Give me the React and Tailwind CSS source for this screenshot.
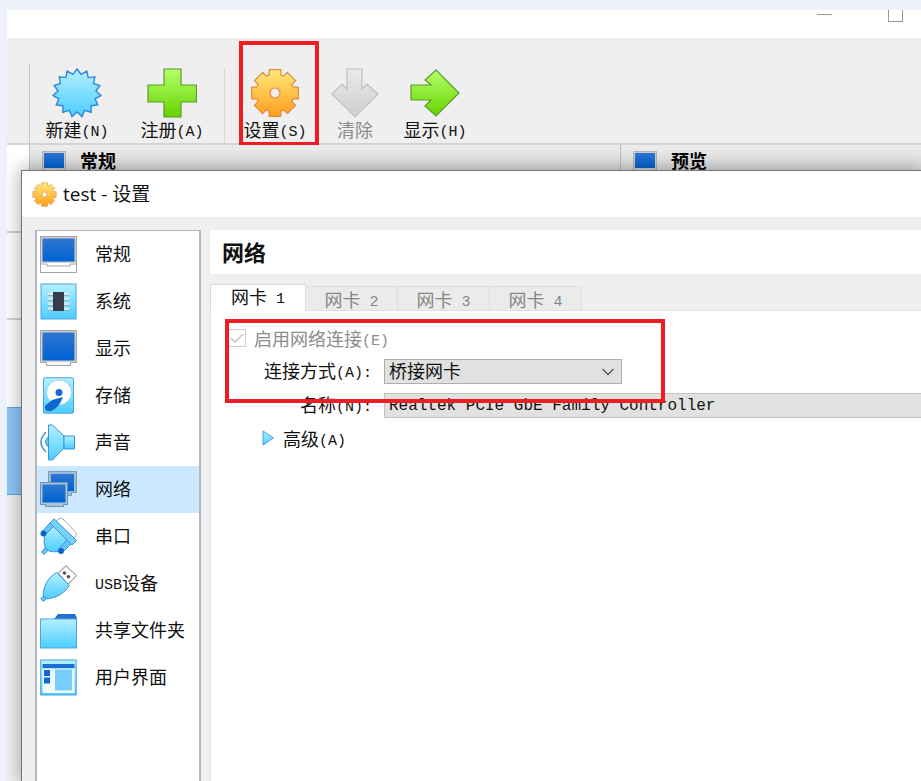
import { useState } from 'react';

const tabs = [1, 2, 3, 4];

// points of the "new" badge, 15 spikes
const burst = Array.from({ length: 30 }, (_, i) => {
  const r = i % 2 ? 19 : 24;
  const a = (i * 12 - 90) * (Math.PI / 180);
  return `${(25 + r * Math.cos(a)).toFixed(1)},${(25 + r * Math.sin(a)).toFixed(1)}`;
}).join(' ');

// outline of the cog, 8 teeth
const cog = Array.from({ length: 8 }, (_, i) =>
  [[-18, 19], [-14, 24], [14, 24], [18, 19]]
    .map(([deg, r]) => {
      const a = (i * 45 + deg - 90) * (Math.PI / 180);
      return `${(25 + r * Math.cos(a)).toFixed(1)},${(25 + r * Math.sin(a)).toFixed(1)}`;
    })
    .join(' ')
).join(' ');

function Gradients() {
  return (
    <svg width="0" height="0" className="absolute" aria-hidden="true">
      <defs>
        <linearGradient id="sky" x1="0" y1="0" x2="0" y2="1">
          <stop offset="0" stopColor="#b4f0ff" />
          <stop offset="1" stopColor="#4ccdff" />
        </linearGradient>
        <linearGradient id="lime" x1="0" y1="0" x2="0" y2="1">
          <stop offset="0" stopColor="#b6ff6c" />
          <stop offset="1" stopColor="#66d400" />
        </linearGradient>
        <linearGradient id="amber" x1="0" y1="0" x2="0" y2="1">
          <stop offset="0" stopColor="#ffe87a" />
          <stop offset="1" stopColor="#ff9e1e" />
        </linearGradient>
        <linearGradient id="grey" x1="0" y1="0" x2="0" y2="1">
          <stop offset="0" stopColor="#e9e9e9" />
          <stop offset="1" stopColor="#cfcfcf" />
        </linearGradient>
        <linearGradient id="royal" x1="0" y1="0" x2="0" y2="1">
          <stop offset="0" stopColor="#2f76d2" />
          <stop offset="1" stopColor="#0063d3" />
        </linearGradient>
      </defs>
    </svg>
  );
}

function Cog({ className }) {
  return (
    <svg viewBox="0 0 50 50" className={className}>
      <path
        d={`M${cog}Z M30 25a5 5 0 1 0-10 0a5 5 0 1 0 10 0Z`}
        fill="url(#amber)"
        fillRule="evenodd"
        stroke="#e08a3c"
        strokeWidth="1.2"
        strokeLinejoin="round"
      />
    </svg>
  );
}

function ScreenIcon({ className }) {
  return (
    <svg viewBox="0 0 24 24" className={className}>
      <rect x="0.5" y="0.5" width="23" height="22" fill="#cfcfcf" stroke="#b4b4b4" />
      <rect x="2" y="2" width="20" height="15" fill="url(#royal)" />
      <path d="M5 18.500h14v2h-14z" fill="#f2f2f2" />
    </svg>
  );
}

const toolIcons = {
  create: (
    <polygon points={burst} fill="url(#sky)" stroke="#2f86da" strokeWidth="1.4" />
  ),
  register: (
    <path d="M17 1h17v16h15.500v17h-15.500v15h-17v-15h-16v-17h16z" fill="url(#lime)" stroke="#5c9a2c" strokeWidth="1.2" />
  ),
  discard: (
    <path d="M17 1h15v20l5-5 11 10-23 23-23-23 10-10 5 5z" fill="url(#grey)" stroke="#c0c0c0" strokeWidth="1.2" />
  ),
  show: (
    <path d="M1 17h20l-6-5 11-10 23 23-23 23-11-10 6-6h-20z" fill="url(#lime)" stroke="#5c9a2c" strokeWidth="1.2" />
  ),
};

const sideIcons = {
  general: (
    <>
      <rect x="0.5" y="0.5" width="36" height="36" fill="#fff" stroke="#a4a4a4" />
      <path d="M1 1h35v26h-35z" fill="#cdcdcd" />
      <rect x="2.500" y="2.500" width="32" height="23" fill="url(#royal)" />
      <path d="M1 28h6v2h23v-2h6" fill="none" stroke="#a4a4a4" />
    </>
  ),
  system: (
    <>
      <rect x="1" y="1" width="35" height="35" fill="url(#sky)" stroke="#4aa5e0" />
      <path d="M8 11h21M8 16h21M8 21h21M8 26h21" stroke="#d5eaf2" strokeWidth="3" />
      <path d="M8 12.500h21M8 17.500h21M8 22.500h21M8 27.500h21" stroke="#7fa3b5" strokeWidth="0.800" />
      <rect x="13" y="9" width="11" height="19" fill="#373c4a" />
    </>
  ),
  display: (
    <>
      <path d="M0.500 0.500h36v32h-6v3h-24v-3h-6z" fill="#f3f3f3" stroke="#a4a4a4" />
      <path d="M1 1h35v31h-35z" fill="#cdcdcd" />
      <rect x="2.500" y="2.500" width="32" height="28" fill="url(#royal)" />
      <path d="M7 33h23" stroke="#fff" />
    </>
  ),
  storage: (
    <>
      <rect x="3.500" y="0.700" width="30" height="35.500" rx="1" fill="url(#sky)" stroke="#4aa5e0" />
      <circle cx="19" cy="15.500" r="12.500" fill="#fff" stroke="#9cc9ec" strokeWidth="0.800" />
      <path d="M23 20L12 23L5 29Q4 35 11 34Q19 31 23 20Z" fill="#0c67cf" />
      <circle cx="19" cy="15.500" r="3.500" fill="#1468cf" />
    </>
  ),
  audio: (
    <>
      <path d="M6 8Q-4 18 6 28" fill="none" stroke="#4a94da" strokeWidth="1.500" />
      <path d="M9 12Q2 18 9 24Z" fill="#67c8f5" stroke="#3b94d8" />
      <path d="M8.500 1h4L24 12v12L12.500 36h-4z" fill="url(#sky)" stroke="#3b94d8" />
      <path d="M24 12h10.500v13H24z" fill="url(#sky)" stroke="#3b94d8" />
    </>
  ),
  network: (
    <>
      <path d="M8.500 0.500h28v21h-5v3h-23z" fill="#9dbbd2" stroke="#7d9bb3" />
      <path d="M11 3h23v17h-23z" fill="url(#royal)" />
      <path d="M0.500 11.500h27v22h-4v2h-18v-2h-5z" fill="#a7c6dc" stroke="#7191ab" />
      <path d="M2.500 13.500h23v18h-23z" fill="url(#royal)" />
    </>
  ),
  serial: (
    <>
      <path d="M15 4L19 0.800Q21 0 23 1L36 14.500Q37 16 36 18L32 22Z" fill="#fff" stroke="#aaa" />
      <path d="M1.500 34L6 29L9 31.500L4 36.500Z" fill="#5cc6fb" stroke="#3b94d8" />
      <path d="M13 7L5 15L4 25Q4 30 9 33Q17 35 21 32L30 24Z" fill="url(#sky)" stroke="#3b94d8" />
      <path d="M10 5L14 0.700L36.500 22.500L32 27Z" fill="#75d3fb" stroke="#3b94d8" />
      <path d="M10 5L13.500 8.500L5.500 16.500L2 13.500ZM27 22L31 26L23 34L19 31Z" fill="#66c5f5" stroke="#3b94d8" />
      <circle cx="3.500" cy="15.500" r="3" fill="#0c62cc" />
      <circle cx="21" cy="33" r="3" fill="#0c62cc" />
    </>
  ),
  usb: (
    <>
      <path d="M18 8L26 0.800L36.500 10.500L28 19.500Z" fill="#fff" stroke="#aaa" strokeWidth="1.200" />
      <circle cx="24.500" cy="8" r="1.800" fill="#555" />
      <circle cx="28.500" cy="11.800" r="1.800" fill="#555" />
      <path d="M16.500 7.500L29.500 20.500Q22 32 7 34L3 30Q4 15 16.500 7.500Z" fill="url(#sky)" stroke="#3b94d8" />
      <path d="M0.800 34L3.500 31L6.500 33.500L3.500 36.500Z" fill="#5cc6fb" stroke="#3b94d8" />
    </>
  ),
  folder: (
    <>
      <path d="M14 7L18 2h17l2 4v4h-23z" fill="#2470d0" />
      <rect x="0.500" y="7" width="36" height="29" fill="url(#sky)" stroke="#4aa5e0" />
    </>
  ),
  ui: (
    <>
      <rect x="0.700" y="1" width="35.500" height="35" fill="url(#sky)" stroke="#4aa5e0" />
      <path d="M2.500 5h32v4h-32z" fill="#1f6fd2" />
      <path d="M2.500 10h32v24h-32z" fill="#f2fbff" />
      <path d="M4 11h6v6h-6zM4 18.500h6v6h-6z" fill="#0c66d3" />
      <path d="M15 10.500h17v21h-17z" fill="#78cdff" />
    </>
  ),
};

const categories = [
  { id: 'general', label: '常规' },
  { id: 'system', label: '系统' },
  { id: 'display', label: '显示' },
  { id: 'storage', label: '存储' },
  { id: 'audio', label: '声音' },
  { id: 'network', label: '网络' },
  { id: 'serial', label: '串口' },
  { id: 'usb', mono: 'USB', label: '设备' },
  { id: 'folder', label: '共享文件夹' },
  { id: 'ui', label: '用户界面' },
];

// accelerator keys and numbers are set in the narrower fixed-width face
function Mono({ children }) {
  return (
    <span className="align-[1px] font-['Liberation_Mono',monospace] text-[15px] leading-none whitespace-pre">
      {children}
    </span>
  );
}

function ToolButton({ icon, label, hotkey, disabled, marked }) {
  return (
    <button
      type="button"
      disabled={disabled}
      className="relative flex w-20 shrink-0 flex-col items-center self-start text-[#111] disabled:text-[#8c8c8c]"
    >
      {icon === 'settings' ? (
        <Cog className="size-[50px] shrink-0" />
      ) : (
        <svg viewBox="0 0 50 50" className="size-[50px] shrink-0">{toolIcons[icon]}</svg>
      )}
      <span className="h-6 leading-[22px] whitespace-nowrap">
        {label}
        {hotkey && <Mono>({hotkey})</Mono>}
      </span>
      {marked && (
        <span className="absolute -top-[27px] -right-1 -bottom-1 left-1 border-4 border-[#f01c24]" />
      )}
    </button>
  );
}

function PanelHeader({ children }) {
  return (
    <div className="flex h-[25px] items-start gap-[14px] border-l border-[#bdbdbd] bg-linear-to-b from-[#ececec] to-[#dedede] pt-[6px] pl-3">
      <ScreenIcon className="size-6 shrink-0" />
      <span className="leading-[18px] font-bold text-black">{children}</span>
    </div>
  );
}

function Sidebar({ active, onSelect }) {
  return (
    <nav className="w-[166px] shrink-0 border-x-2 border-t border-[#b3b7bd] bg-white">
      <ul>
        {categories.map((c) => (
          <li key={c.id}>
            <button
              type="button"
              onClick={() => onSelect(c.id)}
              className={`flex h-[47px] w-full items-center gap-[18px] pl-[3px] text-left ${
                c.id === active ? 'bg-[#cce8ff]' : ''
              }`}
            >
              <svg viewBox="0 0 37 37" className="size-[37px] shrink-0">{sideIcons[c.id]}</svg>
              <span className="pb-[3px] leading-6 whitespace-nowrap">
                {c.mono && <Mono>{c.mono}</Mono>}
                {c.label}
              </span>
            </button>
          </li>
        ))}
      </ul>
    </nav>
  );
}

function NetworkPage() {
  const [tab, setTab] = useState(1);
  const [advanced, setAdvanced] = useState(false);

  return (
    <section className="flex min-w-0 flex-1 flex-col">
      <h2 className="h-11 bg-white pl-3 text-[22px] leading-[42px] font-bold">网络</h2>

      <div role="tablist" className="mt-[10px] flex items-end">
        {tabs.map((n) => (
          <button
            key={n}
            type="button"
            role="tab"
            aria-selected={n === tab}
            onClick={() => setTab(n)}
            className={
              n === tab
                ? 'h-[27px] w-24 border border-b-0 border-[#dcdcdc] bg-white pb-1 leading-[22px]'
                : 'h-[25px] w-[92px] border border-l-0 border-[#dedede] bg-[#ebebeb] leading-[22px] text-[#868686]'
            }
          >
            网卡<Mono> {n}</Mono>
          </button>
        ))}
        <span className="flex-1 border-b border-[#e2e2e2]" />
      </div>

      <div className="relative flex-1 border-l border-[#e2e2e2] bg-white pt-[15px] pl-[17px]">
        <label className="flex h-6 items-center gap-2 leading-6 text-[#8c8c8c]">
          <span className="relative flex size-[18px]">
            <input
              type="checkbox"
              defaultChecked
              disabled
              className="size-[18px] appearance-none border border-[#ccc] bg-white"
            />
            <svg viewBox="0 0 18 18" className="pointer-events-none absolute inset-0">
              <path d="M3 9l4 4 8-8" fill="none" stroke="#c4c4c4" strokeWidth="1.500" />
            </svg>
          </span>
          <span>启用网络连接<Mono>(E)</Mono></span>
        </label>

        <div className="mt-[9px] grid grid-cols-[144px_1fr] items-center gap-x-3 gap-y-[9px] leading-[25px]">
          <label htmlFor="attach" className="h-[25px] text-right leading-[23px] whitespace-nowrap">
            连接方式<Mono>(A):</Mono>
          </label>
          <span className="relative flex w-[238px]">
            <select
              id="attach"
              className="h-[25px] w-full appearance-none border border-[#adadad] bg-[#e1e1e1] px-1 pb-[3px] leading-5"
            >
              <option>桥接网卡</option>
            </select>
            <svg viewBox="0 0 14 8" className="pointer-events-none absolute top-[9px] right-[7px] h-2 w-[14px]">
              <path d="M1.500 1l5.500 5.500L12.500 1" fill="none" stroke="#555" strokeWidth="1.300" />
            </svg>
          </span>

          <label htmlFor="adapter" className="h-[25px] text-right leading-[23px] whitespace-nowrap">
            名称<Mono>(N):</Mono>
          </label>
          <select
            id="adapter"
            className="h-[25px] w-full appearance-none border border-r-0 border-[#c2c2c2] bg-[#e1e1e1] px-1 font-['Liberation_Mono',monospace] text-base leading-5"
          >
            <option>Realtek PCIe GbE Family Controller</option>
          </select>
        </div>

        <button
          type="button"
          aria-expanded={advanced}
          onClick={() => setAdvanced(!advanced)}
          className="mt-2 ml-[34px] flex h-6 items-center gap-[9px] leading-6"
        >
          <svg viewBox="0 0 12 16" className="h-4 w-3">
            <path d="M1 1L11.500 8L1 15Z" fill="url(#sky)" stroke="#4a9ee0" />
          </svg>
          <span>高级<Mono>(A)</Mono></span>
        </button>

        <span className="pointer-events-none absolute top-2 left-[14px] h-[84px] w-[440px] border-4 border-[#f01c24]" />
      </div>
    </section>
  );
}

function SettingsDialog() {
  const [active, setActive] = useState('network');

  return (
    <div
      role="dialog"
      aria-labelledby="dialog-title"
      className="absolute top-[25px] right-0 bottom-0 left-[14px] flex flex-col overflow-hidden border-t border-l border-[#757575] bg-[#efefef] shadow-[0_0_16px_2px_rgba(0,0,0,0.3)]"
    >
      <div className="flex h-[46px] shrink-0 items-center gap-[6px] bg-white pl-[10px]">
        <Cog className="size-[25px]" />
        <h1 id="dialog-title" className="font-['Open_Sans','Noto_Sans_CJK_SC',sans-serif] text-[19px] leading-6">
          test - 设置
        </h1>
      </div>
      <div className="flex min-h-0 flex-1 gap-[9px] pt-[13px] pl-[13px]">
        <Sidebar active={active} onSelect={setActive} />
        <NetworkPage />
      </div>
    </div>
  );
}

export default function App() {
  return (
    <div className="flex min-h-screen bg-[#edf2fa] pt-[10px] pl-[7px] font-['Noto_Sans_CJK_SC',sans-serif] text-lg text-[#111]">
      <Gradients />
      <div className="flex min-w-0 flex-1 flex-col bg-[#efefef]">
        <div className="flex h-7 items-start justify-end gap-14 bg-white pr-[18px]">
          <button type="button" aria-label="最小化" className="mt-1 w-[15px] border-b border-[#999]" />
          <button type="button" aria-label="最大化" className="h-3 w-[15px] border border-t-0 border-[#999]" />
        </div>

        <div className="flex h-[107px] border-b-2 border-[#d4d4d4] pl-[22px]">
          <div className="mt-[26px] mr-[7px] border-l border-[#c6c6c6]" />
          <div className="flex pt-[30px]">
            <ToolButton icon="create" label="新建" hotkey="N" />
            <div className="w-[15px]" />
            <ToolButton icon="register" label="注册" hotkey="A" />
            <div className="mr-[10px] ml-3 border-l border-[#d6d6d6]" />
            <ToolButton icon="settings" label="设置" hotkey="S" marked />
            <ToolButton icon="discard" label="清除" disabled />
            <ToolButton icon="show" label="显示" hotkey="H" />
          </div>
        </div>

        <div className="relative flex flex-1 overflow-hidden">
          {/* machine list, mostly covered by the dialog */}
          <div className="flex w-[22px] shrink-0 flex-col bg-[#f0f0f0]">
            <div className="h-[88px] border-b-2 border-[#d2d2d2] bg-white" />
            <div className="h-[87px] border-b-2 border-[#d2d2d2] bg-white" />
            <div className="h-[87px] bg-white" />
            <div className="h-[88px] border-y border-[#5aa5e4] bg-[#8cc8fa]" />
          </div>
          <div className="grid flex-1 grid-cols-[53fr_27fr] items-start">
            <PanelHeader>常规</PanelHeader>
            <PanelHeader>预览</PanelHeader>
          </div>
          <SettingsDialog />
        </div>
      </div>
    </div>
  );
}
